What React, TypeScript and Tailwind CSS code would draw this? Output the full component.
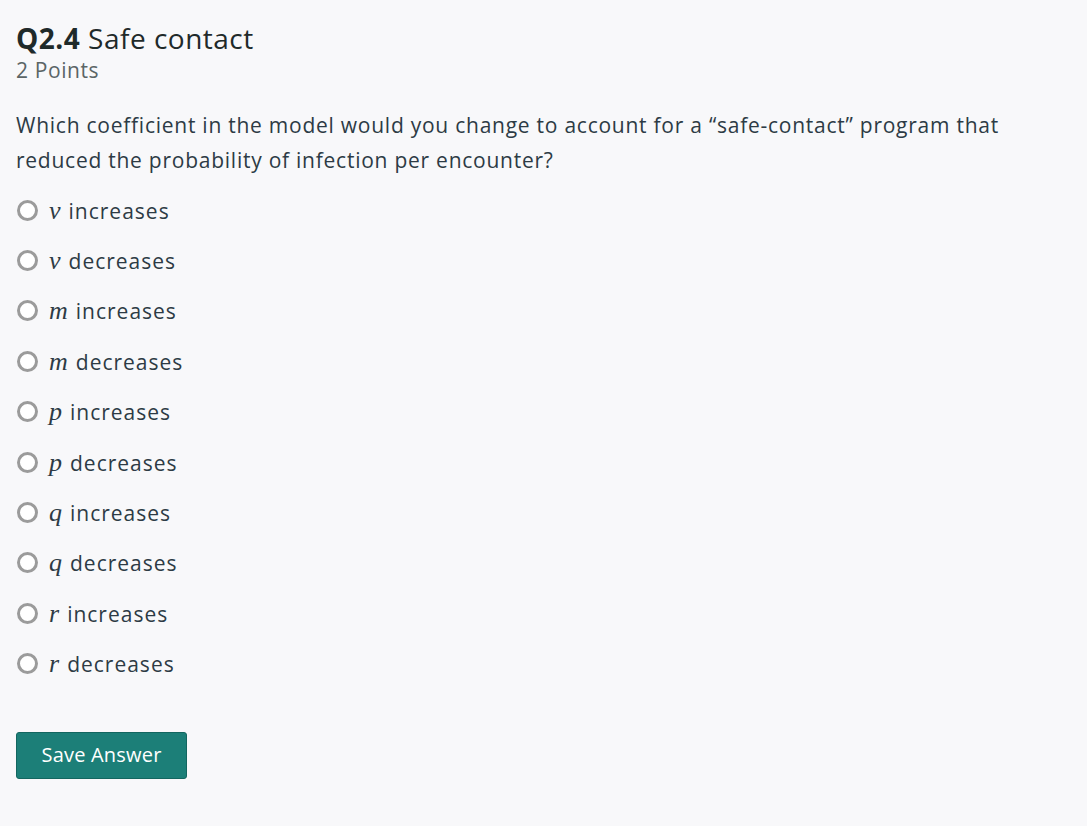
const options: [string, string][] = [
  ['v', 'increases'],
  ['v', 'decreases'],
  ['m', 'increases'],
  ['m', 'decreases'],
  ['p', 'increases'],
  ['p', 'decreases'],
  ['q', 'increases'],
  ['q', 'decreases'],
  ['r', 'increases'],
  ['r', 'decreases'],
];

function Option({ sym, label }: { sym: string; label: string }) {
  return (
    <label className="flex items-center h-[50.4px] cursor-pointer">
      <span className="w-[21px] h-[21px] rounded-full border-[3px] border-[#9b9b9b] bg-white shrink-0 ml-[1px]" />
      <span className="ml-[11px] text-[21px] tracking-[1px] text-[#2d3b45]">
        <span className="italic text-[26px] tracking-normal font-['Liberation_Serif',serif] mr-[8px]">{sym}</span>
        {label}
      </span>
    </label>
  );
}

export default function App() {
  return (
    <div className="min-h-screen bg-[#f8f8fa] font-['Open_Sans','Noto_Sans',sans-serif] text-[#2d3b45] px-4 pt-[20px]">
      <h2 className="text-[28px] leading-[36px] tracking-[0.5px] text-[#1f2a2a]">
        <span className="font-bold">Q2.4</span> Safe contact
      </h2>
      <div className="text-[21px] leading-[28px] tracking-[0.6px] text-[#5b6566]">2 Points</div>
      <p className="mt-[24px] text-[21px] leading-[35px] tracking-[0.75px] max-w-[1020px]">
        Which coefficient in the model would you change to account for a “safe-contact” program that reduced the
        probability of infection per encounter?
      </p>
      <div className="mt-[7px] flex flex-col">
        {options.map(([s, l], i) => (
          <Option key={i} sym={s} label={l} />
        ))}
      </div>
      <button className="mt-[43px] w-[171px] h-[47px] rounded-[3px] bg-[#1c7f78] border border-[#136660] text-white text-[20px] tracking-[0.2px]">
        Save Answer
      </button>
    </div>
  );
}
